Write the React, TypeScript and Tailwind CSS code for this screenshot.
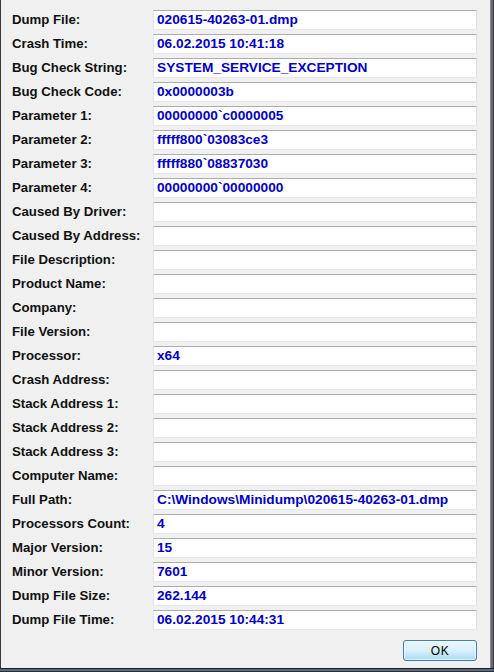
import React from "react";

const rows: [string, string][] = [
  ["Dump File:", "020615-40263-01.dmp"],
  ["Crash Time:", "06.02.2015 10:41:18"],
  ["Bug Check String:", "SYSTEM_SERVICE_EXCEPTION"],
  ["Bug Check Code:", "0x0000003b"],
  ["Parameter 1:", "00000000`c0000005"],
  ["Parameter 2:", "fffff800`03083ce3"],
  ["Parameter 3:", "fffff880`08837030"],
  ["Parameter 4:", "00000000`00000000"],
  ["Caused By Driver:", ""],
  ["Caused By Address:", ""],
  ["File Description:", ""],
  ["Product Name:", ""],
  ["Company:", ""],
  ["File Version:", ""],
  ["Processor:", "x64"],
  ["Crash Address:", ""],
  ["Stack Address 1:", ""],
  ["Stack Address 2:", ""],
  ["Stack Address 3:", ""],
  ["Computer Name:", ""],
  ["Full Path:", "C:\\Windows\\Minidump\\020615-40263-01.dmp"],
  ["Processors Count:", "4"],
  ["Major Version:", "15"],
  ["Minor Version:", "7601"],
  ["Dump File Size:", "262.144"],
  ["Dump File Time:", "06.02.2015 10:44:31"],
];

export default function App() {
  return (
    <div
      className="w-[494px] h-[672px] flex flex-col bg-[#34383e]"
      style={{ fontFamily: '"Liberation Sans", Arial, sans-serif' }}
    >
      <div className="flex flex-1">
        <div className="w-[1px] bg-[#3a3a3a]" />
        <div className="flex-1 bg-[#f0f0f0] flex flex-col pt-[10px] pl-[11px]">
          {rows.map(([label, value]) => (
            <div key={label} className="flex items-center h-[20px] mb-[4px]">
              <div className="w-[141px] text-[13.2px] font-bold text-[#111] leading-none">
                {label}
              </div>
              <div className="w-[324px] h-[20px] flex items-center bg-white border-t border-t-[#abadb3] border-l border-l-[#e2e3ea] border-r border-r-[#dbdfe6] border-b border-b-[#e3e9ef] pl-[3px] text-[13.7px] font-bold text-[#0000c4] leading-none whitespace-nowrap overflow-hidden">
                {value}
              </div>
            </div>
          ))}
          <div className="flex justify-end mt-[6px] pr-[13px]">
            <button className="w-[74px] h-[21px] rounded-[3px] border border-[#3c7fb1] bg-gradient-to-b from-[#eaf6fd] via-[#d9f0fc] to-[#a7d9f5] text-[12px] text-black leading-none tracking-[0.5px] shadow-[inset_0_0_0_1px_rgba(255,255,255,0.6)]">
              OK
            </button>
          </div>
        </div>
        <div className="w-[4px] flex">
          <div className="w-[1px] bg-[#8a8a8a]" />
          <div className="w-[2px] bg-[#6a6470]" />
          <div className="w-[1px] bg-[#3a3a40]" />
        </div>
      </div>
      <div className="h-[4px] flex flex-col">
        <div className="h-[1px] bg-[#1e2228]" />
        <div className="h-[2px] bg-[#5a6878]" />
        <div className="h-[1px] bg-[#2a3038]" />
      </div>
    </div>
  );
}
